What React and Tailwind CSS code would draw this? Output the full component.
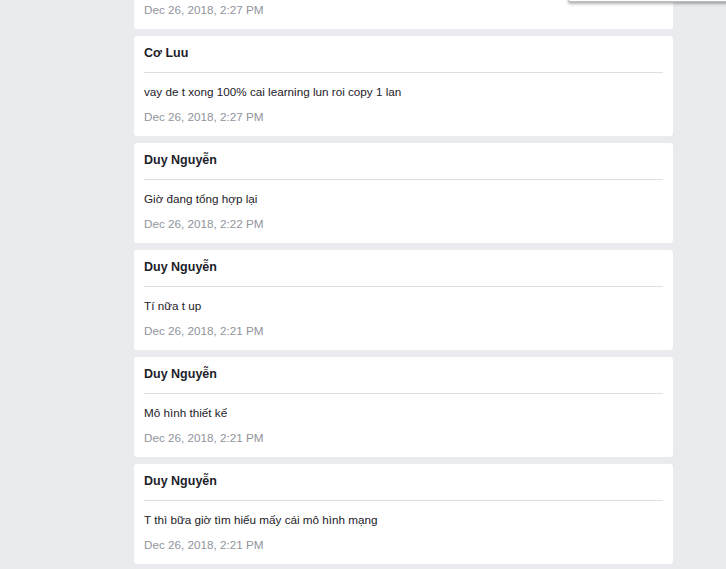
import React from "react";

const items = [
  { name: "Duy Nguyễn", msg: "Cái này t làm xong rồi", date: "Dec 26, 2018, 2:27 PM" },
  { name: "Cơ Luu", msg: "vay de t xong 100% cai learning lun roi copy 1 lan", date: "Dec 26, 2018, 2:27 PM" },
  { name: "Duy Nguyễn", msg: "Giờ đang tổng hợp lại", date: "Dec 26, 2018, 2:22 PM" },
  { name: "Duy Nguyễn", msg: "Tí nữa t up", date: "Dec 26, 2018, 2:21 PM" },
  { name: "Duy Nguyễn", msg: "Mô hình thiết kế", date: "Dec 26, 2018, 2:21 PM" },
  { name: "Duy Nguyễn", msg: "T thì bữa giờ tìm hiểu mấy cái mô hình mạng", date: "Dec 26, 2018, 2:21 PM" },
];

export default function App() {
  return (
    <div
      className="relative h-[569px] w-[726px] overflow-hidden bg-[#e9ebee]"
      style={{ fontFamily: '"Liberation Sans", Arial, sans-serif' }}
    >
      <div className="ml-[134px] mt-[-71px] flex w-[539px] flex-col gap-[7px]">
        {items.map((it, i) => (
          <div key={i} className="rounded-[3px] bg-white px-[10px] pb-[11px]">
            <div className="border-b border-[#dddfe2] pt-[9px] pb-[11px] text-[12.5px] font-bold leading-[16px] text-[#1d2129]">
              {it.name}
            </div>
            <div className="pt-[11px] text-[11.7px] leading-[16px] text-[#1d2129]">{it.msg}</div>
            <div className="mt-[9px] text-[11.7px] leading-[16px] text-[#90949c]">{it.date}</div>
          </div>
        ))}
      </div>
      <div className="absolute left-[568px] top-[-20px] h-[22px] w-[170px] rounded-[2px] border border-[#bdbdbd] bg-white shadow-[0_2px_3px_rgba(0,0,0,0.3)]" />
    </div>
  );
}
